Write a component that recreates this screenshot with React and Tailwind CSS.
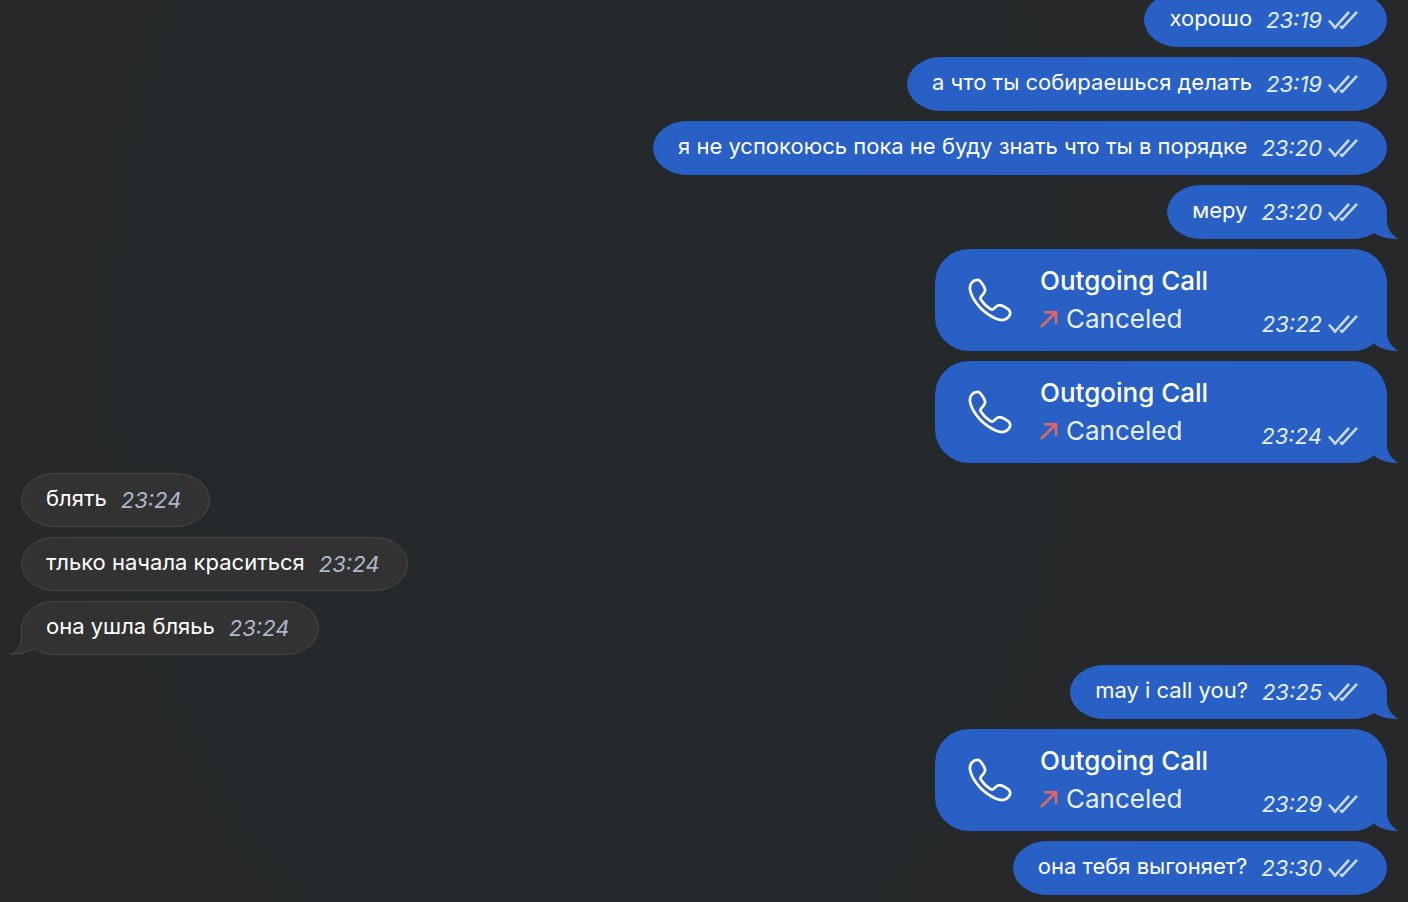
import React from "react";

const messages = [
  { id: 1, type: "text", out: true, text: "хорошо", time: "23:19" },
  { id: 2, type: "text", out: true, text: "а что ты собираешься делать", time: "23:19" },
  { id: 3, type: "text", out: true, text: "я не успокоюсь пока не буду знать что ты в порядке", time: "23:20" },
  { id: 4, type: "text", out: true, text: "меру", time: "23:20", tail: true },
  { id: 5, type: "call", out: true, time: "23:22", tail: true },
  { id: 6, type: "call", out: true, time: "23:24", tail: true },
  { id: 7, type: "text", out: false, text: "блять", time: "23:24" },
  { id: 8, type: "text", out: false, text: "тлько начала краситься", time: "23:24" },
  { id: 9, type: "text", out: false, text: "она ушла бляьь", time: "23:24", tail: true },
  { id: 10, type: "text", out: true, text: "may i call you?", time: "23:25", tail: true },
  { id: 11, type: "call", out: true, time: "23:29", tail: true },
  { id: 12, type: "text", out: true, text: "она тебя выгоняет?", time: "23:30" },
];

function ReadTicks() {
  return (
    <svg className="h-5 w-[30px] shrink-0" viewBox="0 0 30 20" fill="none" stroke="#cbdaf5" strokeWidth="2.5" aria-hidden="true">
      <path d="M1 10.5 7 17.6 21 1.8" />
      <path d="M12.2 16 14.2 17.8 29 1.8" />
    </svg>
  );
}

function PhoneIcon() {
  return (
    <svg className="size-[46px] shrink-0" viewBox="0 0 46 46" fill="none" stroke="white" strokeWidth="2.7" strokeLinejoin="round" aria-hidden="true">
      <path d="M5.400 5C8 2.600 11.800 2 13.800 4.800 15.400 7 16.800 9.200 17.800 11.400 18.600 13.200 18 14.800 16.600 16.600L14 19.600C13.200 20.600 13.200 21.600 13.800 22.600 16.400 26.600 19.800 30 23.600 32.200 24.600 32.800 25.600 32.800 26.400 32L29.400 29.400C31 28 32.600 27.800 34.600 28.600 37.200 29.600 39.400 31 41.400 32.400 44 34.400 43.800 37.600 41.400 40.200 38.600 43.400 33.600 43.600 28.600 41.400 17 36.400 7.200 26.200 3.600 15.200 2.300 11 2.800 7.400 5.400 5Z" />
    </svg>
  );
}

function MissedArrow() {
  return (
    <svg className="size-[18px] shrink-0" viewBox="0 0 18 18" fill="none" stroke="#e3675f" strokeWidth="2.6" aria-hidden="true">
      <path d="M1 17 16 2M4 2.2H16V14" />
    </svg>
  );
}

function OutgoingTail() {
  return (
    <svg className="absolute -right-3 bottom-0 h-[27px] w-10" viewBox="0 0 40 27" aria-hidden="true">
      <path d="M28 0V11C28.800 17 33 24 40 26.800 30 27.200 21 25 15 21L8 12V0Z" fill="#2860c6" />
    </svg>
  );
}

function OutgoingCallTail() {
  return (
    <svg className="absolute -right-3 bottom-0 h-[34px] w-10" viewBox="0 -7 40 34" aria-hidden="true">
      <path d="M28 -7V11C28.800 17 33 24 40 26.800 30 27.200 21 25 15 19.500L8 12V-7Z" fill="#2860c6" />
    </svg>
  );
}

function IncomingTail() {
  return (
    <svg className="absolute -bottom-px -left-[13px] h-[27px] w-10" viewBox="0 0 40 27" aria-hidden="true">
      <path d="M12 0V11C11.200 17 7 24 0 26.800 10 27.200 19 25 25 21L32 12V0Z" fill="#323232" />
      <path d="M12.500 0V12C12 18 8 24 1 26.500 10 26.500 19 24.500 25 21" fill="none" stroke="#45474b" />
    </svg>
  );
}

function Stamp({ time, out }) {
  return (
    <span className="flex items-center gap-[6px]">
      <time className={`text-[22px] leading-7 italic ${out ? "text-[#e6eefb]" : "text-[#a9b8cc]"}`}>{time}</time>
      {out && <ReadTicks />}
    </span>
  );
}

function TextBubble({ message }) {
  const { out, text, time, tail } = message;
  return (
    <div
      className={`relative flex gap-[14px] rounded-[34px/27px] ${
        out
          ? "bg-[#2860c6] pt-[11px] pr-[29px] pb-[13px] pl-[25px]"
          : "border border-[#45474b] bg-[#323232] pt-[10px] pr-7 pb-3 pl-6"
      }`}
    >
      {tail && (out ? <OutgoingTail /> : <IncomingTail />)}
      <p className="relative text-[22px] leading-7 text-white">{text}</p>
      <span className="pt-[2px]">
        <Stamp time={time} out={out} />
      </span>
    </div>
  );
}

function CallBubble({ message }) {
  return (
    <div className="relative flex min-w-[452px] items-center rounded-[34px] bg-[#2860c6] py-[13px] pr-[29px] pl-8">
      {message.tail && <OutgoingCallTail />}
      <PhoneIcon />
      <div className="ml-[27px] flex-1 text-[26px] leading-[38px]">
        <h2 className="font-medium text-white">Outgoing Call</h2>
        <p className="flex items-center gap-2 text-[#e6eefb]">
          <MissedArrow />
          Canceled
        </p>
      </div>
      <div className="self-end">
        <Stamp time={message.time} out />
      </div>
    </div>
  );
}

export default function App() {
  return (
    <main className="flex h-screen flex-col justify-end overflow-hidden bg-[#272829] bg-[radial-gradient(ellipse_48%_110%_at_42%_38%,#24292b_0%,#24292b_35%,#272829_100%)] px-[21px] pb-[7px] font-[Inter,'Liberation_Sans',sans-serif]">
      <ol className="flex flex-col gap-[10px]">
        {messages.map((message) => (
          <li key={message.id} className={`flex ${message.out ? "justify-end" : "justify-start"}`}>
            {message.type === "call" ? <CallBubble message={message} /> : <TextBubble message={message} />}
          </li>
        ))}
      </ol>
    </main>
  );
}
